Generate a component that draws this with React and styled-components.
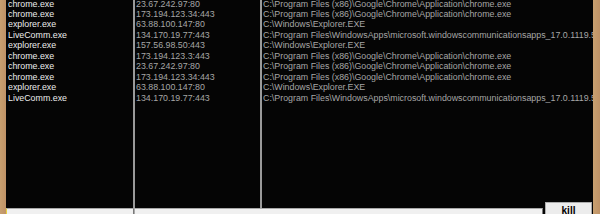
import React from "react";
import styled, { createGlobalStyle } from "styled-components";

const Global = createGlobalStyle`
  html, body { margin: 0; padding: 0; background: #c49a6c; overflow: hidden; }
  #root { width: 600px; height: 214px; overflow: hidden; }
`;

const Frame = styled.div`
  display: flex;
  width: 600px;
  height: 240px;
  background: #c49a6c;
`;

const Edge = styled.div`
  width: ${(p) => p.$w}px;
  flex: none;
  background: linear-gradient(to right, #c8a070, #bf9266);
`;

const Panel = styled.div`
  flex: 1;
  display: flex;
  flex-direction: column;
  background: #050505;
  min-width: 0;
`;

const List = styled.div`
  display: flex;
  height: 208px;
  overflow: hidden;
`;

const Column = styled.div`
  width: ${(p) => (p.$w ? `${p.$w}px` : "auto")};
  flex: ${(p) => (p.$w ? "none" : "1")};
  min-width: 0;
  border-left: ${(p) => (p.$sep ? "2px solid #9a9a9a" : "none")};
  padding-left: ${(p) => p.$pad}px;
  overflow: hidden;
`;

const Rows = styled.div`
  margin-top: -1.4px;
`;

const Cell = styled.div`
  height: 10.45px;
  line-height: 10.45px;
  font-family: "Liberation Sans", Arial, sans-serif;
  font-size: 8.85px;
  color: ${(p) => (p.$bright ? "#ececec" : "#a6a6a6")};
  white-space: nowrap;
  overflow: hidden;
`;

const Footer = styled.div`
  display: flex;
  align-items: flex-start;
  margin-top: -6px;
  padding-right: 1px;
`;

const Field = styled.div`
  width: ${(p) => (p.$w ? `${p.$w}px` : "auto")};
  flex: ${(p) => (p.$w ? "none" : "1")};
  margin-top: 6px;
  height: 20px;
  box-sizing: border-box;
  background: #f0f0f0;
  border-top: 1px solid #a8a8a8;
  border-left: 1px solid ${(p) => (p.$focus ? "#e8d040" : "#a8a8a8")};
  border-right: 1px solid #7a7a7a;
`;

const KillButton = styled.button`
  margin-left: 2px;
  width: 47px;
  height: 22px;
  box-sizing: border-box;
  border: 1px solid #adadad;
  background: #ececec;
  padding: 2px 0 0;
  display: flex;
  justify-content: center;
  align-items: flex-start;
  font-family: "Liberation Sans", Arial, sans-serif;
  font-weight: bold;
  font-size: 10px;
  line-height: 12px;
  color: #000;
`;

const chrome = "C:\\Program Files (x86)\\Google\\Chrome\\Application\\chrome.exe";
const explorer = "C:\\Windows\\Explorer.EXE";
const live =
  "C:\\Program Files\\WindowsApps\\microsoft.windowscommunicationsapps_17.0.1119.512_x64__8wekyb3d8bbwe\\livecomm.exe";

const rows = [
  ["chrome.exe", "23.67.242.97:80", chrome],
  ["chrome.exe", "173.194.123.34:443", chrome],
  ["explorer.exe", "63.88.100.147:80", explorer],
  ["LiveComm.exe", "134.170.19.77:443", live],
  ["explorer.exe", "157.56.98.50:443", explorer],
  ["chrome.exe", "173.194.123.3:443", chrome],
  ["chrome.exe", "23.67.242.97:80", chrome],
  ["chrome.exe", "173.194.123.34:443", chrome],
  ["explorer.exe", "63.88.100.147:80", explorer],
  ["LiveComm.exe", "134.170.19.77:443", live],
];

export default function App() {
  return (
    <>
      <Global />
      <Frame>
        <Edge $w={6} />
        <Panel>
          <List>
            <Column $w={125} $pad={2}>
              <Rows>
                {rows.map((r, i) => (
                  <Cell key={i} $bright>{r[0]}</Cell>
                ))}
              </Rows>
            </Column>
            <Column $w={124} $sep $pad={1}>
              <Rows>
                {rows.map((r, i) => (
                  <Cell key={i}>{r[1]}</Cell>
                ))}
              </Rows>
            </Column>
            <Column $sep $pad={1}>
              <Rows>
                {rows.map((r, i) => (
                  <Cell key={i}>{r[2]}</Cell>
                ))}
              </Rows>
            </Column>
          </List>
          <Footer>
            <Field $w={128} $focus />
            <Field />
            <KillButton>kill</KillButton>
          </Footer>
        </Panel>
        <Edge $w={7} />
      </Frame>
    </>
  );
}
